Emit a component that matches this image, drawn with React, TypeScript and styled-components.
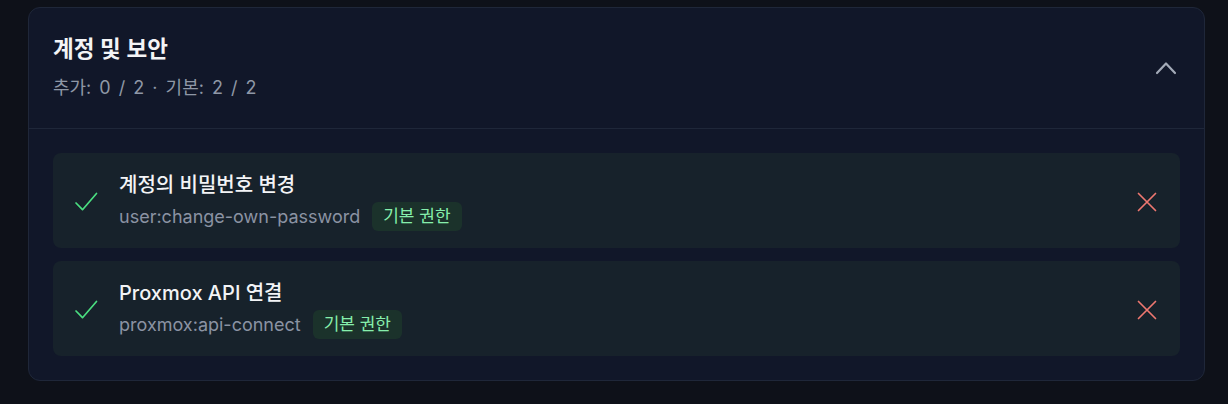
import React from "react";
import styled, { createGlobalStyle } from "styled-components";

const GlobalStyle = createGlobalStyle`
  body {
    margin: 0;
    background: #0e1119;
    font-family: "Inter", "Noto Sans CJK KR", sans-serif;
    -webkit-font-smoothing: antialiased;
  }
`;

const Page = styled.div`
  padding: 7px 23px 0 28px;
`;

const Card = styled.section`
  background: #111729;
  border: 1px solid #1f2739;
  border-radius: 12px;
  overflow: hidden;
`;

const Header = styled.div`
  display: flex;
  align-items: center;
  justify-content: space-between;
  padding: 27px 26px 27px 24px;
  border-bottom: 1px solid #1f2739;
`;

const Title = styled.h2`
  margin: 0 0 12px;
  font-size: 22.5px;
  line-height: 28px;
  font-weight: 600;
  color: #f3f4f6;
`;

const Summary = styled.div`
  font-size: 18px;
  line-height: 26px;
  word-spacing: 3px;
  color: #8f97a6;
`;

const ToggleButton = styled.button`
  display: flex;
  padding: 0;
  border: 0;
  background: none;
  color: #a3aab7;
  cursor: pointer;
`;

const List = styled.div`
  display: flex;
  flex-direction: column;
  gap: 13px;
  padding: 24px;
`;

const Item = styled.div`
  display: flex;
  align-items: center;
  padding: 19px 23px 17px 21px;
  background: #17222b;
  border-radius: 8px;
`;

const Content = styled.div`
  flex: 1;
  margin-left: 21px;
`;

const ItemTitle = styled.div`
  font-size: 20px;
  line-height: 26px;
  font-weight: 500;
  color: #f3f4f6;
`;

const Meta = styled.div`
  display: flex;
  align-items: center;
  gap: 12px;
  margin-top: 4px;
`;

const Code = styled.span`
  font-size: 18px;
  line-height: 26px;
  color: #8b93a3;
`;

const Badge = styled.span`
  font-size: 17px;
  line-height: 21px;
  padding: 4px 11px;
  border-radius: 6px;
  background: #1b322b;
  color: #86efac;
`;

const IconButton = styled.button`
  display: flex;
  padding: 0;
  border: 0;
  background: none;
  color: #ee7770;
  cursor: pointer;
`;

const CheckIcon = () => (
  <svg width="24" height="24" viewBox="0 0 24 24" fill="none">
    <path
      d="M2 13 L8.5 19.7 L22.5 3.5"
      stroke="#4ade80"
      strokeWidth="1.7"
      strokeLinecap="round"
      strokeLinejoin="round"
    />
  </svg>
);

const CloseIcon = () => (
  <svg width="20" height="20" viewBox="0 0 20 20" fill="none">
    <path
      d="M1.5 1.5 L18.5 18.5 M18.5 1.5 L1.5 18.5"
      stroke="currentColor"
      strokeWidth="1.7"
      strokeLinecap="round"
    />
  </svg>
);

const ChevronUp = () => (
  <svg width="24" height="24" viewBox="0 0 24 24" fill="none">
    <path
      d="M3 17 L12 7.5 L21 17"
      stroke="currentColor"
      strokeWidth="2.2"
      strokeLinecap="round"
      strokeLinejoin="round"
    />
  </svg>
);

interface Permission {
  name: string;
  code: string;
}

const permissions: Permission[] = [
  { name: "계정의 비밀번호 변경", code: "user:change-own-password" },
  { name: "Proxmox API 연결", code: "proxmox:api-connect" },
];

export default function App() {
  return (
    <Page>
      <GlobalStyle />
      <Card>
        <Header>
          <div>
            <Title>계정 및 보안</Title>
            <Summary>추가: 0 / 2 · 기본: 2 / 2</Summary>
          </div>
          <ToggleButton aria-label="접기">
            <ChevronUp />
          </ToggleButton>
        </Header>
        <List>
          {permissions.map((p) => (
            <Item key={p.code}>
              <CheckIcon />
              <Content>
                <ItemTitle>{p.name}</ItemTitle>
                <Meta>
                  <Code>{p.code}</Code>
                  <Badge>기본 권한</Badge>
                </Meta>
              </Content>
              <IconButton aria-label="제거">
                <CloseIcon />
              </IconButton>
            </Item>
          ))}
        </List>
      </Card>
    </Page>
  );
}
